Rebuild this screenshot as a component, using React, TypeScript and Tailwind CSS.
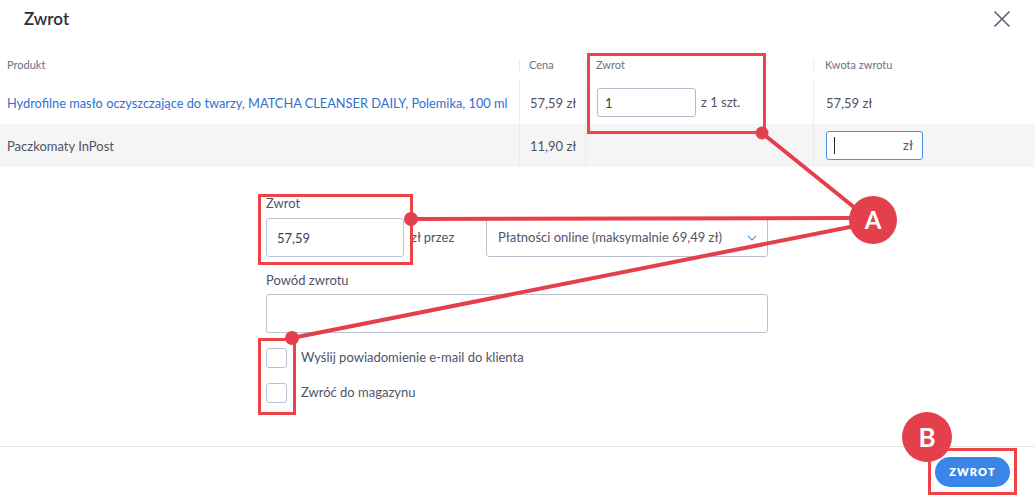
import { useState } from "react"

const font = { fontFamily: "Lato, 'Noto Sans', sans-serif" }

export default function App() {
  const [qty, setQty] = useState("1")
  const [amount, setAmount] = useState("57,59")
  const [reason, setReason] = useState("")

  return (
    <div className="relative w-[1035px] h-[499px] bg-white overflow-hidden text-[#4f5466]" style={font}>
      {/* header */}
      <div className="flex items-start justify-between h-[49px] pl-[24px] pr-[24px] pt-[6px]">
        <h2 className="text-[17px] font-semibold text-[#2a2e3b]">Zwrot</h2>
        <button className="mt-[4px] text-[#5a6172]">
          <svg width="18" height="18" viewBox="0 0 18 18" fill="none" stroke="currentColor" strokeWidth="1.6">
            <path d="M1.5 1.5 L16.5 16.5 M16.5 1.5 L1.5 16.5" />
          </svg>
        </button>
      </div>

      {/* table */}
      <div className="grid grid-cols-[519px_66px_228px_1fr]">
        <div className="h-[32px] flex items-center px-[7px] text-[11px] text-[#6b7082]">Produkt</div>
        <div className="h-[32px] flex items-center px-[10px] text-[11px] text-[#6b7082] relative">
          <span className="absolute left-0 top-[11px] h-[13px] border-l border-[#ececec]" />Cena
        </div>
        <div className="h-[32px] flex items-center px-[11px] text-[11px] text-[#6b7082] relative">
          <span className="absolute left-0 top-[11px] h-[13px] border-l border-[#ececec]" />Zwrot
        </div>
        <div className="h-[32px] flex items-center px-[12px] text-[11px] text-[#6b7082] relative">
          <span className="absolute left-0 top-[11px] h-[13px] border-l border-[#ececec]" />Kwota zwrotu
        </div>

        <div className="h-[43px] flex items-center pt-[2px] px-[7px] text-[12.8px] text-[#2f6fd1] whitespace-nowrap">
          Hydrofilne masło oczyszczające do twarzy, MATCHA CLEANSER DAILY, Polemika, 100 ml
        </div>
        <div className="h-[43px] flex items-center pt-[2px] px-[10px] text-[13px] border-l border-[#ececec] whitespace-nowrap">57,59 zł</div>
        <div className="h-[43px] flex items-center gap-[5px] px-[11px] text-[13px] border-l border-[#ececec]">
          <input value={qty} onChange={e => setQty(e.target.value)}
            className="w-[99px] h-[29px] px-[7px] border border-[#b4bccf] rounded-[3px] text-[13px] text-[#3a3f4f] outline-none" />
          <span className="whitespace-nowrap">z 1 szt.</span>
        </div>
        <div className="h-[43px] flex items-center pt-[2px] px-[12px] text-[13px] border-l border-[#ececec]">57,59 zł</div>

        <div className="h-[43px] flex items-center pt-[2px] px-[7px] text-[13px] bg-[#f5f5f5]">Paczkomaty InPost</div>
        <div className="h-[43px] flex items-center pt-[2px] px-[10px] text-[13px] bg-[#f5f5f5] border-l border-[#ececec] whitespace-nowrap">11,90 zł</div>
        <div className="h-[43px] bg-[#f5f5f5] border-l border-[#ececec]" />
        <div className="h-[43px] flex items-center px-[12px] bg-[#f5f5f5] border-l border-[#ececec]">
          <div className="w-[97px] h-[29px] flex items-center justify-between pl-[7px] pr-[9px] bg-white border border-[#4a8fe6] rounded-[3px] text-[13px]">
            <span className="w-px h-[17px] bg-[#222]" />
            <span>zł</span>
          </div>
        </div>
      </div>

      {/* form */}
      <div className="ml-[266px] w-[502px] pt-[28px] text-[13px]">
        <label className="block text-[13px] leading-[17px] text-[#4f5466]">Zwrot</label>
        <div className="flex items-center mt-[6px]">
          <input value={amount} onChange={e => setAmount(e.target.value)}
            className="w-[138px] h-[39px] px-[10px] border border-[#b9c1d2] rounded-[3px] text-[13px] text-[#3a3f4f] outline-none" />
          <span className="w-[82px] pl-[7px] whitespace-nowrap">zł przez</span>
          <div className="flex-1 h-[39px] flex items-center justify-between pl-[11px] pr-[10px] border border-[#b9c1d2] rounded-[3px]">
            <span className="whitespace-nowrap">Płatności online (maksymalnie 69,49 zł)</span>
            <svg width="10" height="6" viewBox="0 0 10 6" fill="none" stroke="#5b9be8" strokeWidth="1.1">
              <path d="M1 1 L5 5 L9 1" />
            </svg>
          </div>
        </div>

        <label className="block mt-[15px] text-[13px] leading-[17px]">Powód zwrotu</label>
        <input value={reason} onChange={e => setReason(e.target.value)}
          className="block w-full h-[39px] mt-[5px] px-[10px] border border-[#b9c1d2] rounded-[3px] outline-none" />

        <div className="flex items-center gap-[14px] mt-[15px]">
          <span className="w-[21px] h-[20px] border border-[#b9c1d2] rounded-[3px] bg-white" />
          <span>Wyślij powiadomienie e-mail do klienta</span>
        </div>
        <div className="flex items-center gap-[14px] mt-[15px]">
          <span className="w-[21px] h-[20px] border border-[#b9c1d2] rounded-[3px] bg-white" />
          <span>Zwróć do magazynu</span>
        </div>
      </div>

      <div className="mt-[43px] border-t border-[#e6e6e6] flex justify-end pt-[10px] pr-[25px]">
        <button className="w-[75px] h-[30px] rounded-full bg-[#3a86e8] text-white text-[11px] font-extrabold tracking-[0.1em]">
          ZWROT
        </button>
      </div>

      {/* annotations */}
      <div className="absolute left-[587px] top-[53px] w-[179px] h-[81px] border-[3px] border-[#f04347]" />
      <div className="absolute left-[258px] top-[194px] w-[155px] h-[71px] border-[3px] border-[#f04347]" />
      <div className="absolute left-[258px] top-[338px] w-[38px] h-[77px] border-[3px] border-[#f04347]" />
      <div className="absolute left-[928px] top-[448px] w-[89px] h-[47px] border-[3px] border-[#f04347]" />
      <svg className="absolute inset-0 pointer-events-none" width="1035" height="499">
        <g stroke="#e3404b" strokeWidth="4" strokeLinecap="round">
          <line x1="762" y1="133" x2="860" y2="212" />
          <line x1="411" y1="219" x2="855" y2="218" />
          <line x1="292" y1="338" x2="855" y2="226" />
        </g>
        <g fill="#e3404b">
          <circle cx="762" cy="133" r="6.5" />
          <circle cx="411" cy="219" r="7" />
          <circle cx="292" cy="338" r="7" />
          <circle cx="873" cy="220" r="24" />
          <circle cx="927" cy="437" r="25" />
        </g>
      </svg>
      <div className="absolute left-[849px] top-[196px] w-[48px] h-[48px] flex items-center justify-center text-white text-[24px] font-bold">A</div>
      <div className="absolute left-[902px] top-[412px] w-[50px] h-[50px] flex items-center justify-center text-white text-[26px] font-bold">B</div>
    </div>
  )
}
